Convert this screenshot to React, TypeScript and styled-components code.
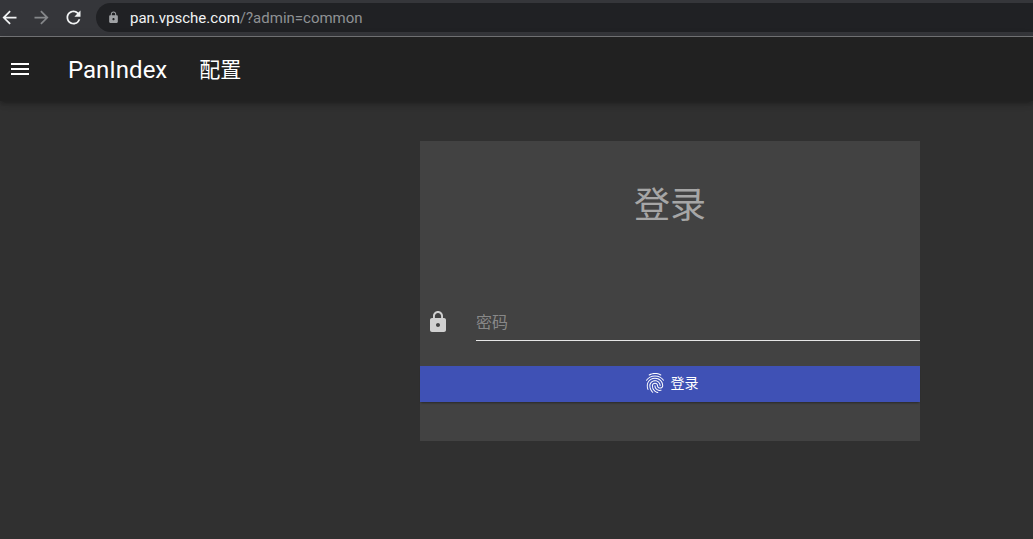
import React from "react";
import styled, { createGlobalStyle } from "styled-components";
import { MdArrowBack, MdArrowForward, MdFingerprint, MdLock, MdMenu, MdRefresh } from "react-icons/md";

const GlobalStyle = createGlobalStyle`
  html, body {
    margin: 0;
    padding: 0;
    height: 100%;
    overflow: hidden;
    background: #303030;
    font-family: Roboto, "Noto Sans CJK SC", sans-serif;
  }
  #root {
    height: 100%;
  }
`;

const Page = styled.div`
  height: 539px;
  display: flex;
  flex-direction: column;
  background: #303030;
`;

const BrowserBar = styled.div`
  height: 37px;
  flex: none;
  display: flex;
  align-items: center;
  box-sizing: border-box;
  padding: 0 0 1px 0;
  background: #35363a;
  border-bottom: 1px solid #77787a;
`;

const NavButton = styled.span<{ $dim?: boolean; $gap: number }>`
  width: 22px;
  height: 22px;
  display: flex;
  align-items: center;
  justify-content: center;
  margin-left: ${(p) => p.$gap}px;
  color: ${(p) => (p.$dim ? "#85878a" : "#f1f3f4")};
  font-size: 21px;
`;

const AddressField = styled.div`
  flex: 1;
  height: 29px;
  margin-left: 12px;
  display: flex;
  align-items: center;
  padding-left: 11px;
  background: #202124;
  border-radius: 15px 0 0 15px;
  font-family: Roboto, sans-serif;
  font-size: 15px;
`;

const AddressLock = styled(MdLock)`
  color: #a0a2a5;
  font-size: 13px;
  margin-right: 10px;
`;

const Host = styled.span`
  color: #f1f3f4;
`;

const AddressPath = styled.span`
  color: #8f9194;
`;

const AppBar = styled.header`
  height: 64px;
  flex: none;
  display: flex;
  align-items: center;
  background: #212121;
  color: #fff;
  box-shadow: 0 2px 4px -1px rgba(0, 0, 0, 0.2), 0 4px 5px 0 rgba(0, 0, 0, 0.14), 0 1px 10px 0 rgba(0, 0, 0, 0.12);
`;

const MenuIcon = styled(MdMenu)`
  font-size: 24px;
  margin-left: 8px;
`;

const Brand = styled.div`
  margin: 1px 0 0 36px;
  font-size: 24px;
  line-height: 32px;
`;

const TabLink = styled.div`
  margin: 1px 0 0 32px;
  font-size: 21px;
  line-height: 32px;
`;

const Content = styled.main`
  flex: 1;
  display: flex;
  justify-content: center;
  padding: 40px 0 0 307px;
`;

const LoginCard = styled.section`
  width: 500px;
  height: 300px;
  display: flex;
  flex-direction: column;
  background: #424242;
`;

const Title = styled.h1`
  margin: 39px 0 0;
  font-size: 36px;
  line-height: 52px;
  font-weight: 400;
  text-align: center;
  color: rgba(255, 255, 255, 0.54);
`;

const PasswordRow = styled.div`
  display: flex;
  align-items: center;
  height: 46px;
  margin-top: 63px;
`;

const RowIcon = styled(MdLock)`
  flex: none;
  width: 24px;
  height: 24px;
  margin: 8px 26px 0 6px;
  color: #d0d0d0;
`;

const PasswordInput = styled.input`
  flex: 1;
  min-width: 0;
  height: 46px;
  box-sizing: border-box;
  padding: 7px 0 0;
  border: 0;
  border-bottom: 1px solid #e6e6e6;
  outline: none;
  background: transparent;
  color: #fff;
  font-size: 16px;
  font-family: "Noto Sans CJK SC", sans-serif;

  &::placeholder {
    color: rgba(255, 255, 255, 0.38);
    opacity: 1;
  }
`;

const LoginButton = styled.button`
  height: 36px;
  margin-top: 25px;
  display: flex;
  align-items: center;
  justify-content: center;
  gap: 4px;
  border: 0;
  padding: 0 0 4px 1px;
  background: #3f51b5;
  color: #fff;
  font-size: 14px;
  font-family: "Noto Sans CJK SC", sans-serif;
  box-shadow: 0 2px 2px -1px rgba(0, 0, 0, 0.4);
`;

const ButtonIcon = styled(MdFingerprint)`
  font-size: 24px;
  margin-bottom: -2px;
`;

export default function App() {
  return (
    <Page>
      <GlobalStyle />
      <BrowserBar>
        <NavButton $gap={-2}>
          <MdArrowBack />
        </NavButton>
        <NavButton $gap={10} $dim>
          <MdArrowForward />
        </NavButton>
        <NavButton $gap={10}>
          <MdRefresh />
        </NavButton>
        <AddressField>
          <AddressLock />
          <Host>pan.vpsche.com</Host>
          <AddressPath>/?admin=common</AddressPath>
        </AddressField>
      </BrowserBar>
      <AppBar>
        <MenuIcon />
        <Brand>PanIndex</Brand>
        <TabLink>配置</TabLink>
      </AppBar>
      <Content>
        <LoginCard>
          <Title>登录</Title>
          <PasswordRow>
            <RowIcon />
            <PasswordInput type="password" placeholder="密码" />
          </PasswordRow>
          <LoginButton type="button">
            <ButtonIcon />
            登录
          </LoginButton>
        </LoginCard>
      </Content>
    </Page>
  );
}
